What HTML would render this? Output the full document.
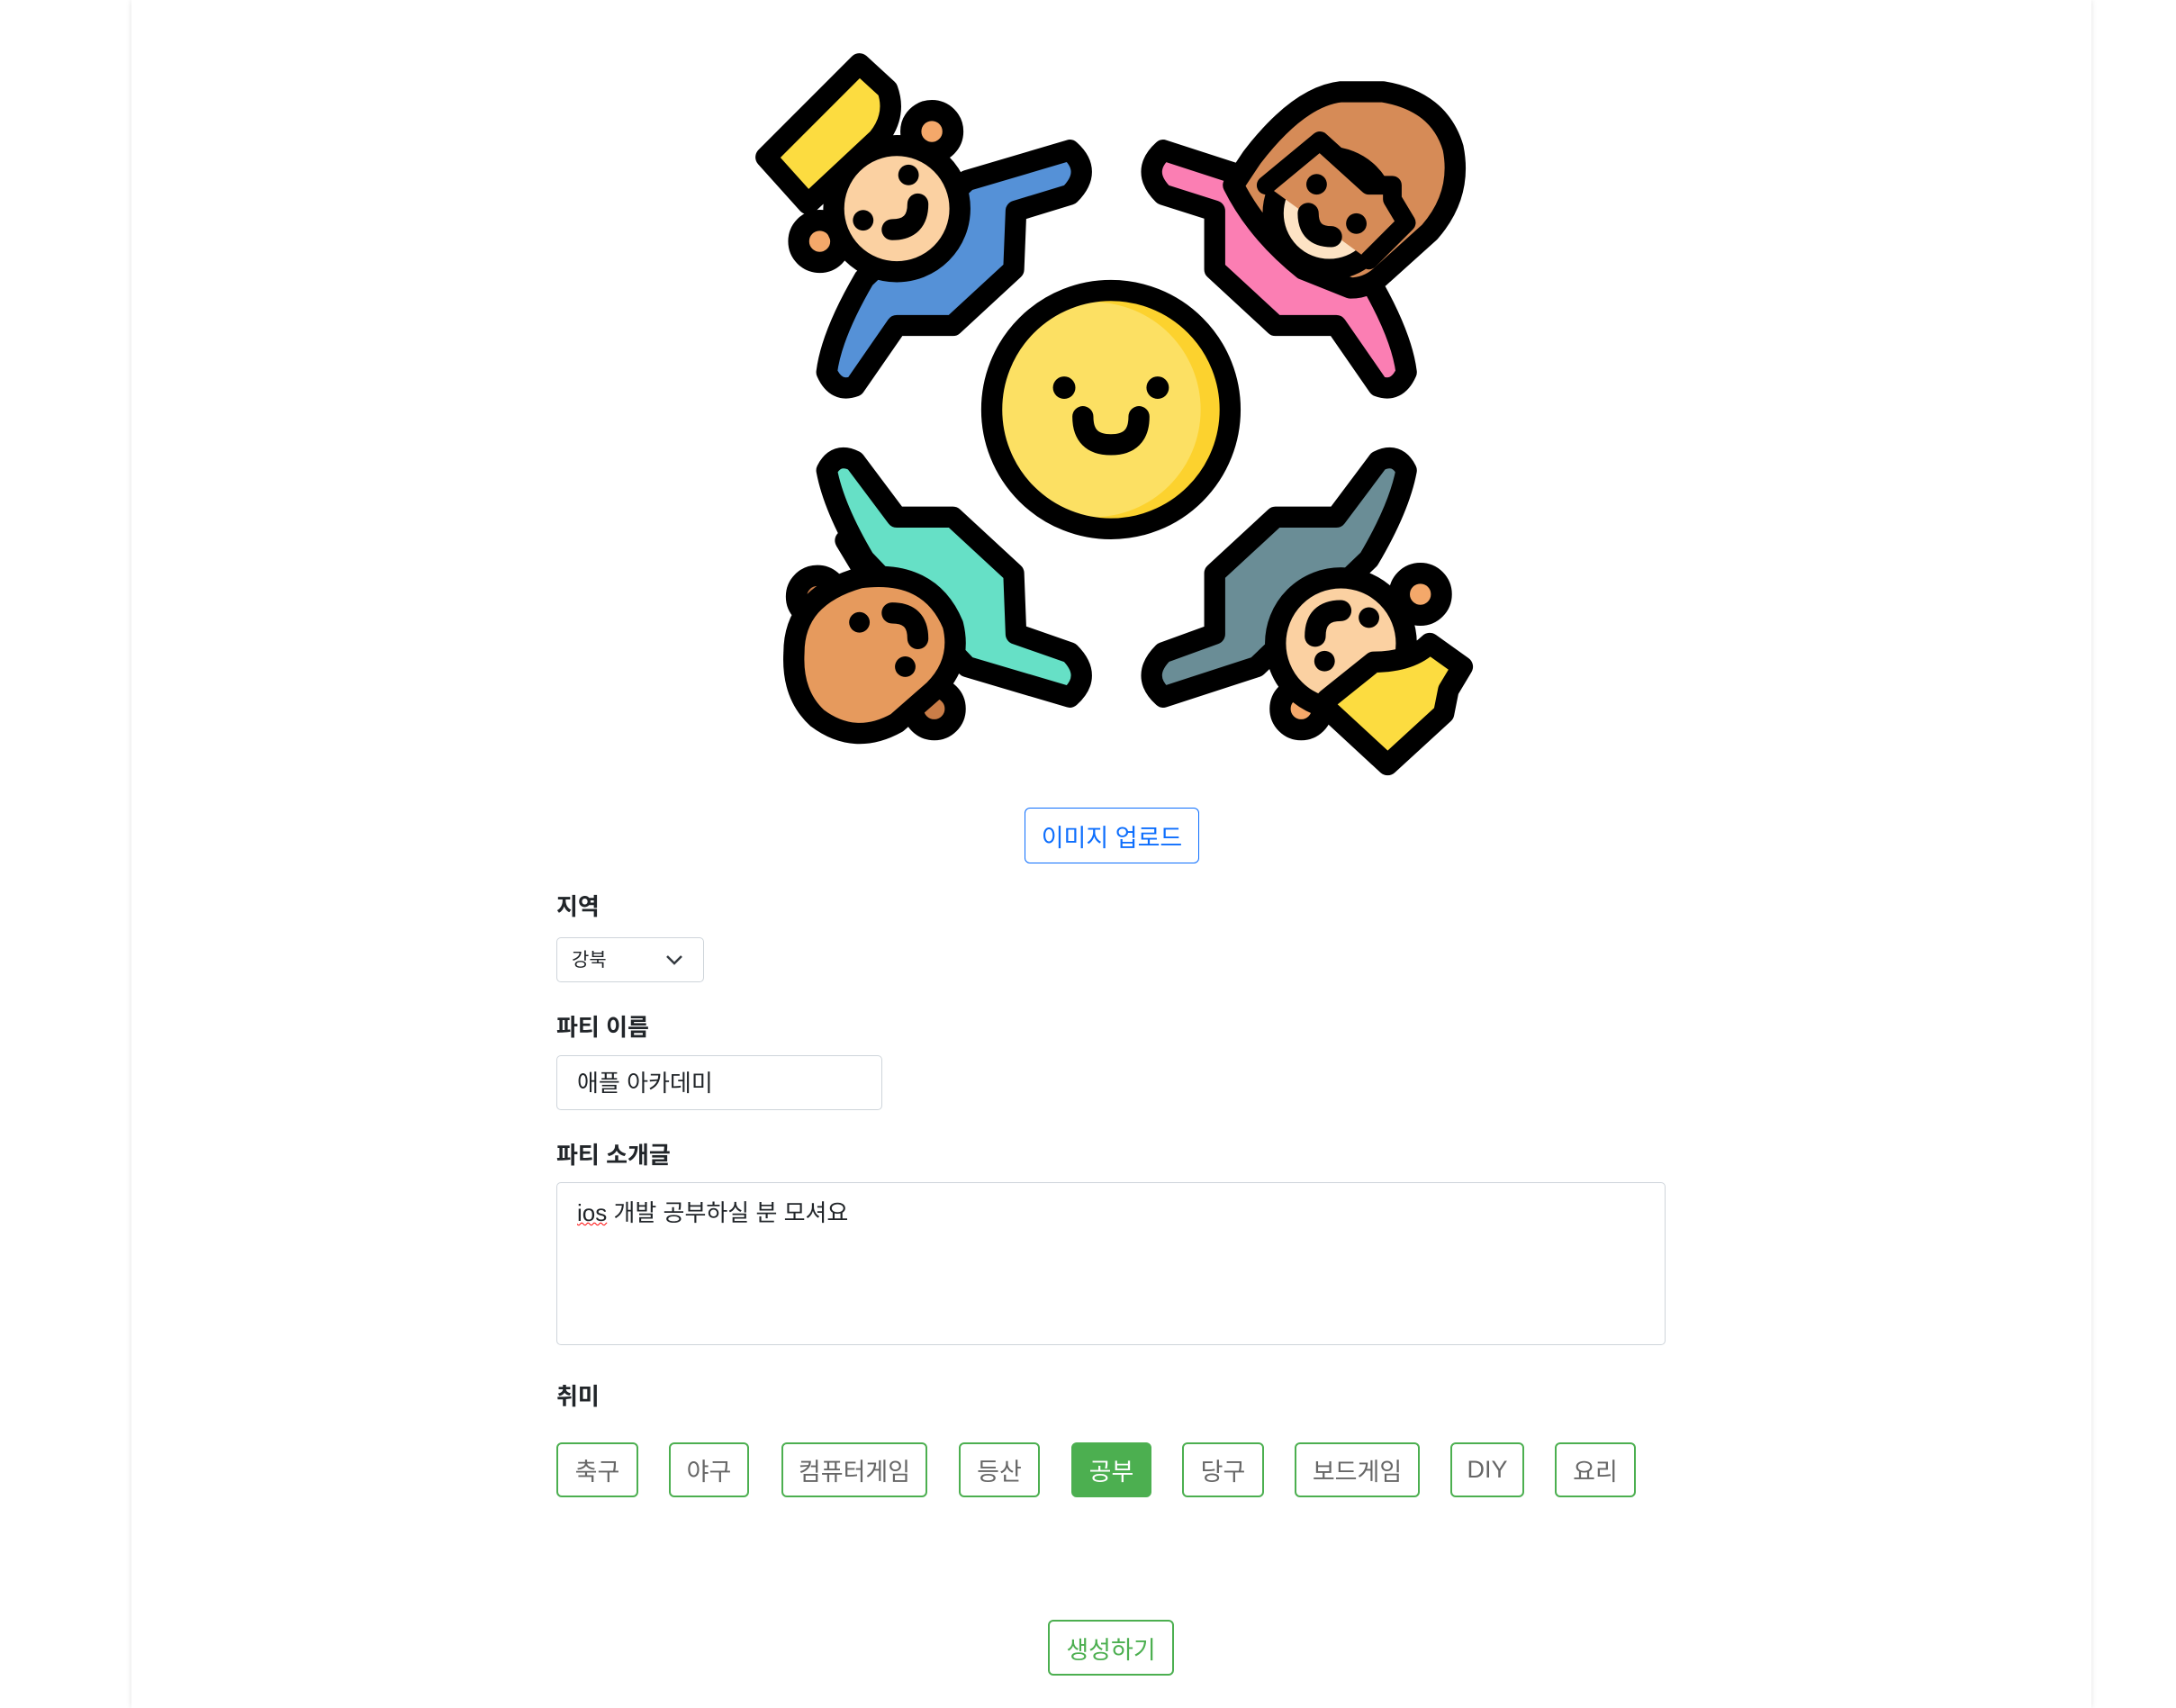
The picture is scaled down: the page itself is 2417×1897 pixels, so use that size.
<!DOCTYPE html>
<html><head><meta charset="utf-8"><style>
*{box-sizing:border-box;margin:0;padding:0}
body{width:2417px;height:1897px;background:#fff;position:relative;overflow:hidden;font-family:"Liberation Sans","Noto Sans CJK KR",sans-serif;color:#212529}
.wrap{position:absolute;left:146px;top:0;width:2177px;height:1897px;box-shadow:0 0 6px rgba(0,0,0,.12);background:#fff}
.abs{position:absolute}
.lbl{position:absolute;left:618px;font-weight:bold;font-size:26px;line-height:1}
.box{position:absolute;border:1.5px solid #ced4da;border-radius:5px;background:#fff}
.hb{position:absolute;top:1602px;height:61px;border:2px solid #4caf50;border-radius:6px;color:#666;font-size:27px;display:flex;align-items:center;justify-content:center;background:#fff}
.hb.on{background:#4caf50;color:#fff}
</style></head><body>
<div class="wrap"></div>
<svg class="abs" style="left:830px;top:50px" width="810" height="840" viewBox="0 0 1560 1618" preserveAspectRatio="none" stroke="#000" stroke-width="45" stroke-linejoin="round" stroke-linecap="round">
<defs><clipPath id="c"><circle cx="778" cy="780" r="255"/></clipPath></defs>
<!-- top-left blue -->
<path d="M230 730 L320 600 L440 600 L570 480 L575 355 L690 320 Q740 270 690 225 L470 290 L250 500 Q180 620 170 700 Q190 745 230 730Z" fill="#5591d7"/>
<circle cx="395" cy="185" r="45" fill="#f4a86a"/>
<circle cx="155" cy="420" r="45" fill="#f4a86a"/>
<circle cx="320" cy="350" r="135" fill="#fbd1a2"/>
<path d="M40 240 L240 40 L300 95 Q320 150 280 200 L130 340 Z" fill="#fcdc40"/>
<circle cx="345" cy="278" r="22" fill="#000" stroke="none"/>
<circle cx="248" cy="375" r="22" fill="#000" stroke="none"/>
<path d="M365 340 Q365 395 310 395" fill="none"/>
<!-- top-right pink -->
<path d="M1350 730 L1260 600 L1130 600 L1000 480 L1000 355 L890 320 Q840 270 890 225 L1090 290 L1330 500 Q1400 620 1410 700 Q1390 745 1350 730Z" fill="#fb7eb3"/>
<path d="M1270 100 Q1180 110 1080 240 L1040 300 Q1090 400 1190 480 L1290 520 Q1330 520 1360 490 L1460 400 Q1530 320 1510 220 Q1480 120 1360 100Z" fill="#d68b57"/>
<circle cx="1245" cy="360" r="120" fill="#fde3c4"/>
<path d="M1110 300 L1225 205 L1330 300 L1380 300 L1380 330 L1410 380 L1330 460" fill="#d68b57" stroke-width="40"/>
<circle cx="1218" cy="298" r="22" fill="#000" stroke="none"/>
<circle cx="1303" cy="382" r="22" fill="#000" stroke="none"/>
<path d="M1200 360 Q1200 410 1250 410" fill="none"/>
<!-- bottom-left teal -->
<path d="M230 890 L320 1010 L440 1010 L570 1130 L575 1260 L690 1300 Q740 1350 690 1395 L470 1330 L250 1100 Q185 990 170 910 Q190 870 230 890Z" fill="#66e0c6"/>
<circle cx="150" cy="1180" r="45" fill="#c97d48"/>
<circle cx="400" cy="1420" r="45" fill="#c97d48"/>
<path d="M100 1300 Q100 1180 240 1140 Q390 1120 440 1240 Q460 1320 400 1380 L320 1450 Q230 1500 150 1440 Q95 1390 100 1300Z" fill="#e69a5d"/>
<circle cx="240" cy="1235" r="22" fill="#000" stroke="none"/>
<circle cx="338" cy="1330" r="22" fill="#000" stroke="none"/>
<path d="M310 1215 Q365 1215 365 1270" fill="none"/>
<path d="M210 1060 L240 1110" fill="none"/>
<!-- bottom-right gray -->
<path d="M1350 890 L1260 1010 L1130 1010 L1000 1130 L1000 1260 L890 1300 Q840 1350 890 1395 L1090 1330 L1330 1100 Q1395 990 1410 910 Q1390 870 1350 890Z" fill="#6a8d96"/>
<circle cx="1440" cy="1175" r="45" fill="#f4a86a"/>
<circle cx="1185" cy="1420" r="45" fill="#f4a86a"/>
<circle cx="1270" cy="1280" r="140" fill="#fbd1a2"/>
<path d="M1240 1400 L1340 1320 Q1420 1320 1460 1280 L1530 1330 L1500 1380 L1490 1430 L1370 1540 L1240 1420Z" fill="#fcdc40"/>
<circle cx="1330" cy="1225" r="22" fill="#000" stroke="none"/>
<circle cx="1235" cy="1318" r="22" fill="#000" stroke="none"/>
<path d="M1270 1210 Q1215 1210 1215 1265" fill="none"/>
<!-- center smiley -->
<circle cx="778" cy="780" r="255" fill="#fcd22e" stroke="none"/>
<circle cx="740" cy="780" r="230" fill="#fce063" stroke="none" clip-path="url(#c)"/>
<circle cx="778" cy="780" r="255" fill="none"/>
<circle cx="678" cy="733" r="24" fill="#000" stroke="none"/>
<circle cx="878" cy="733" r="24" fill="#000" stroke="none"/>
<path d="M718 795 Q718 855 778 855 Q838 855 838 795" fill="none"/>
</svg>

<div class="abs" style="left:1138px;top:897px;width:194px;height:62px;border:1.5px solid #0d6efd;border-radius:6px;color:#0d6efd;font-size:27px;display:flex;align-items:center;justify-content:center">이미지 업로드</div>

<div class="lbl" style="top:994px">지역</div>
<div class="box" style="left:618px;top:1041px;width:164px;height:50px;font-size:21px;padding-left:16px;line-height:50px">강북
<svg class="abs" style="left:120px;top:18px" width="20" height="12" viewBox="0 0 20 12"><path d="M2 2 L10 10 L18 2" fill="none" stroke="#343a40" stroke-width="2.5"/></svg></div>

<div class="lbl" style="top:1128px">파티 이름</div>
<div class="box" style="left:618px;top:1172px;width:362px;height:61px;font-size:26px;padding-left:22px;line-height:61px">애플 아카데미</div>

<div class="lbl" style="top:1270px">파티 소개글</div>
<div class="box" style="left:618px;top:1313px;width:1232px;height:181px;font-size:26px;padding:17px 22px;line-height:1.3"><span style="text-decoration:underline wavy red;text-decoration-thickness:1px">ios</span> 개발 공부하실 분 모셔요</div>

<div class="lbl" style="top:1538px">취미</div>
<div class="hb" style="left:618px;width:91px">축구</div>
<div class="hb" style="left:743px;width:89px">야구</div>
<div class="hb" style="left:868px;width:162px">컴퓨터게임</div>
<div class="hb" style="left:1065px;width:90px">등산</div>
<div class="hb on" style="left:1190px;width:89px">공부</div>
<div class="hb" style="left:1313px;width:91px">당구</div>
<div class="hb" style="left:1438px;width:139px">보드게임</div>
<div class="hb" style="left:1611px;width:82px">DIY</div>
<div class="hb" style="left:1727px;width:90px">요리</div>

<div class="hb" style="left:1164px;top:1799px;width:140px;height:62px;color:#4caf50">생성하기</div>
</body></html>
